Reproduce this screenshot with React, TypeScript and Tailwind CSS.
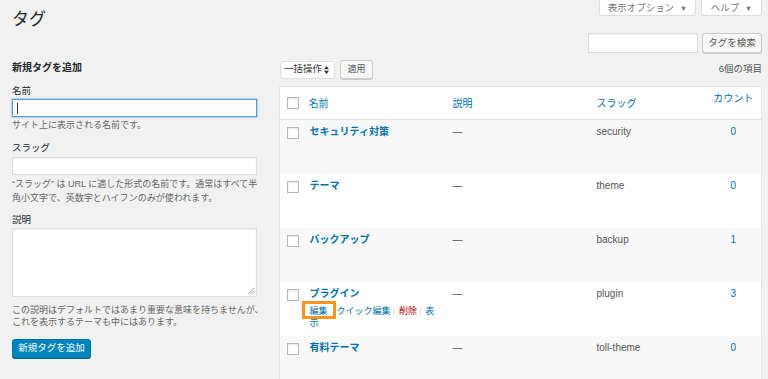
import React from "react";

const tags = [
  { name: "セキュリティ対策", slug: "security", count: 0 },
  { name: "テーマ", slug: "theme", count: 0 },
  { name: "バックアップ", slug: "backup", count: 1 },
  { name: "プラグイン", slug: "plugin", count: 3, actions: true },
  { name: "有料テーマ", slug: "toll-theme", count: 0 },
];

function Check() {
  return (
    <span className="block w-[12px] h-[12px] bg-white border border-[#b4b9be] shadow-[inset_0_1px_2px_rgba(0,0,0,0.1)]" />
  );
}

function SortArrows() {
  return (
    <svg width="5" height="8" viewBox="0 0 5 8" className="ml-[2px]">
      <path d="M0 3.3 L2.5 0 L5 3.3 Z M0 4.7 L2.5 8 L5 4.7 Z" fill="#333" />
    </svg>
  );
}

export default function App() {
  return (
    <div className="w-full h-[379px] overflow-hidden bg-[#f1f1f1] pl-[12px] pr-[6px] font-[family-name:'Liberation_Sans','Noto_Sans_CJK_JP',sans-serif] text-[#444]">
      {/* top bar */}
      <div className="flex justify-between h-[33px]">
        <h1 className="pt-[10px] text-[17px] leading-[20px] font-normal text-[#23282d]">
          タグ
        </h1>
        <div className="flex gap-[5px] items-start">
          <button className="w-[97px] h-[16px] bg-white border border-t-0 border-[#ddd] rounded-b-[3px] text-[9.5px] leading-[15px] text-[#72777c]">
            表示オプション <span className="text-[7.5px] ml-[3px]">▼</span>
          </button>
          <button className="w-[61px] h-[16px] bg-white border border-t-0 border-[#ddd] rounded-b-[3px] text-[9.5px] leading-[15px] text-[#72777c]">
            ヘルプ <span className="text-[7.5px] ml-[3px]">▼</span>
          </button>
        </div>
      </div>

      {/* search */}
      <div className="flex justify-end gap-[4px] h-[20px]">
        <div className="w-[110px] h-[20px] bg-white border border-[#ddd] shadow-[inset_0_1px_2px_rgba(0,0,0,0.07)]" />
        <button className="w-[60px] h-[20px] bg-[#f7f7f7] border border-[#ccc] rounded-[3px] shadow-[0_1px_0_#ccc] text-[9.5px] text-[#555]">
          タグを検索
        </button>
      </div>

      <div className="flex mt-[7px]">
        {/* left column */}
        <div className="w-[245px] shrink-0">
          <h2 className="text-[10px] leading-[16px] font-bold text-[#23282d]">新規タグを追加</h2>
          <div className="mt-[8px] text-[9.5px] leading-[14px] text-[#23282d]">名前</div>
          <div className="mt-[1px] h-[18px] bg-white border border-[#5b9dd9] shadow-[0_0_2px_rgba(30,140,190,0.8)] flex items-center pl-[4px]">
            <span className="block w-px h-[11px] bg-[#333]" />
          </div>
          <p className="mt-[2px] text-[9px] leading-[12px] text-[#666]">サイト上に表示される名前です。</p>

          <div className="mt-[10px] text-[9.5px] leading-[14px] text-[#23282d]">スラッグ</div>
          <div className="mt-[2px] h-[18px] bg-white border border-[#ddd] shadow-[inset_0_1px_2px_rgba(0,0,0,0.07)]" />
          <p className="mt-[2px] text-[9px] leading-[14px] text-[#666] whitespace-nowrap">
            “スラッグ” は URL に適した形式の名前です。通常はすべて半
            <br />
            角小文字で、英数字とハイフンのみが使われます。
          </p>

          <div className="mt-[8px] text-[9.5px] leading-[14px] text-[#23282d]">説明</div>
          <div className="relative mt-[1px] h-[69px] bg-white border border-[#ddd] shadow-[inset_0_1px_2px_rgba(0,0,0,0.07)]">
            <svg width="6" height="6" viewBox="0 0 6 6" className="absolute right-[2px] bottom-[2px]">
              <path d="M6 0 L0 6 M6 3 L3 6" stroke="#999" strokeWidth="0.8" />
            </svg>
          </div>
          <p className="mt-[7px] text-[9px] leading-[12px] text-[#666] whitespace-nowrap">
            この説明はデフォルトではあまり重要な意味を持ちませんが、
            <br />
            これを表示するテーマも中にはあります。
          </p>

          <button className="mt-[11px] w-[79px] h-[19px] bg-[#0085ba] border border-[#0073aa] rounded-[3px] shadow-[0_1px_0_#006799] text-[9.5px] text-white">
            新規タグを追加
          </button>
        </div>

        {/* right column */}
        <div className="ml-[22px] flex-1">
          <div className="flex items-center justify-between h-[19px]">
            <div className="flex items-center gap-[5px] pl-[1px]">
              <div className="w-[55px] h-[18px] bg-white border border-[#ddd] rounded-[3px] flex items-center pl-[3px] text-[9.5px] text-[#32373c]">
                一括操作
                <SortArrows />
              </div>
              <button className="w-[33px] h-[19px] bg-[#f7f7f7] border border-[#ccc] rounded-[3px] shadow-[0_1px_0_#ccc] text-[9px] text-[#555]">
                適用
              </button>
            </div>
            <span className="text-[9.5px] text-[#555]">6個の項目</span>
          </div>

          <table className="mt-[7px] w-full table-fixed border-collapse bg-white border border-[#e5e5e5] shadow-[0_1px_1px_rgba(0,0,0,0.04)]">
            <colgroup>
              <col className="w-[22px]" />
              <col className="w-[144px]" />
              <col className="w-[144px]" />
              <col className="w-[120px]" />
              <col />
            </colgroup>
            <thead>
              <tr className="h-[33px] border-b border-[#e1e1e1]">
                <th className="pl-[7px] align-middle">
                  <Check />
                </th>
                <th className="pl-[7px] text-left font-normal text-[10px] text-[#0073aa] align-middle">名前</th>
                <th className="pl-[7px] text-left font-normal text-[10px] text-[#0073aa] align-middle">説明</th>
                <th className="pl-[7px] text-left font-normal text-[10px] text-[#0073aa] align-middle">スラッグ</th>
                <th className="pt-[5px] pr-[4px] text-center font-normal text-[10px] leading-[14px] text-[#0073aa] align-top">カウント</th>
              </tr>
            </thead>
            <tbody>
              {tags.map((t, i) => (
                <tr key={t.slug} className={`h-[54px] align-top ${i % 2 === 0 ? "bg-[#f9f9f9]" : "bg-white"}`}>
                  <td className="pl-[7px] pt-[7px]">
                    <Check />
                  </td>
                  <td className="pl-[8px] pr-[8px] pt-[4px]">
                    <div className="text-[10px] leading-[16px] font-bold text-[#0073aa]">{t.name}</div>
                    {t.actions && (
                      <div className="mt-[3px] text-[9px] leading-[12px] text-[#0073aa]">
                        <span className="relative">
                          編集
                          <span className="absolute -left-[8px] -right-[8px] -top-[5px] -bottom-[3px] border-[3px] border-[#f7931e]" />
                        </span>
                        <span className="ml-[9px]">クイック編集</span>
                        <span className="text-[#ddd] ml-[2px] mr-[4px]">|</span>
                        <span className="text-[#a00]">削除</span>
                        <span className="text-[#ddd] ml-[2px] mr-[4px]">|</span>
                        <span>表示</span>
                      </div>
                    )}
                  </td>
                  <td className="pl-[7px] pt-[4px] text-[10px] leading-[16px] text-[#555]">—</td>
                  <td className="pl-[7px] pt-[4px] text-[10px] leading-[16px] text-[#555]">{t.slug}</td>
                  <td className="pt-[4px] pr-[4px] text-center text-[10px] leading-[16px] text-[#0073aa]">{t.count}</td>
                </tr>
              ))}
            </tbody>
          </table>
        </div>
      </div>
    </div>
  );
}
